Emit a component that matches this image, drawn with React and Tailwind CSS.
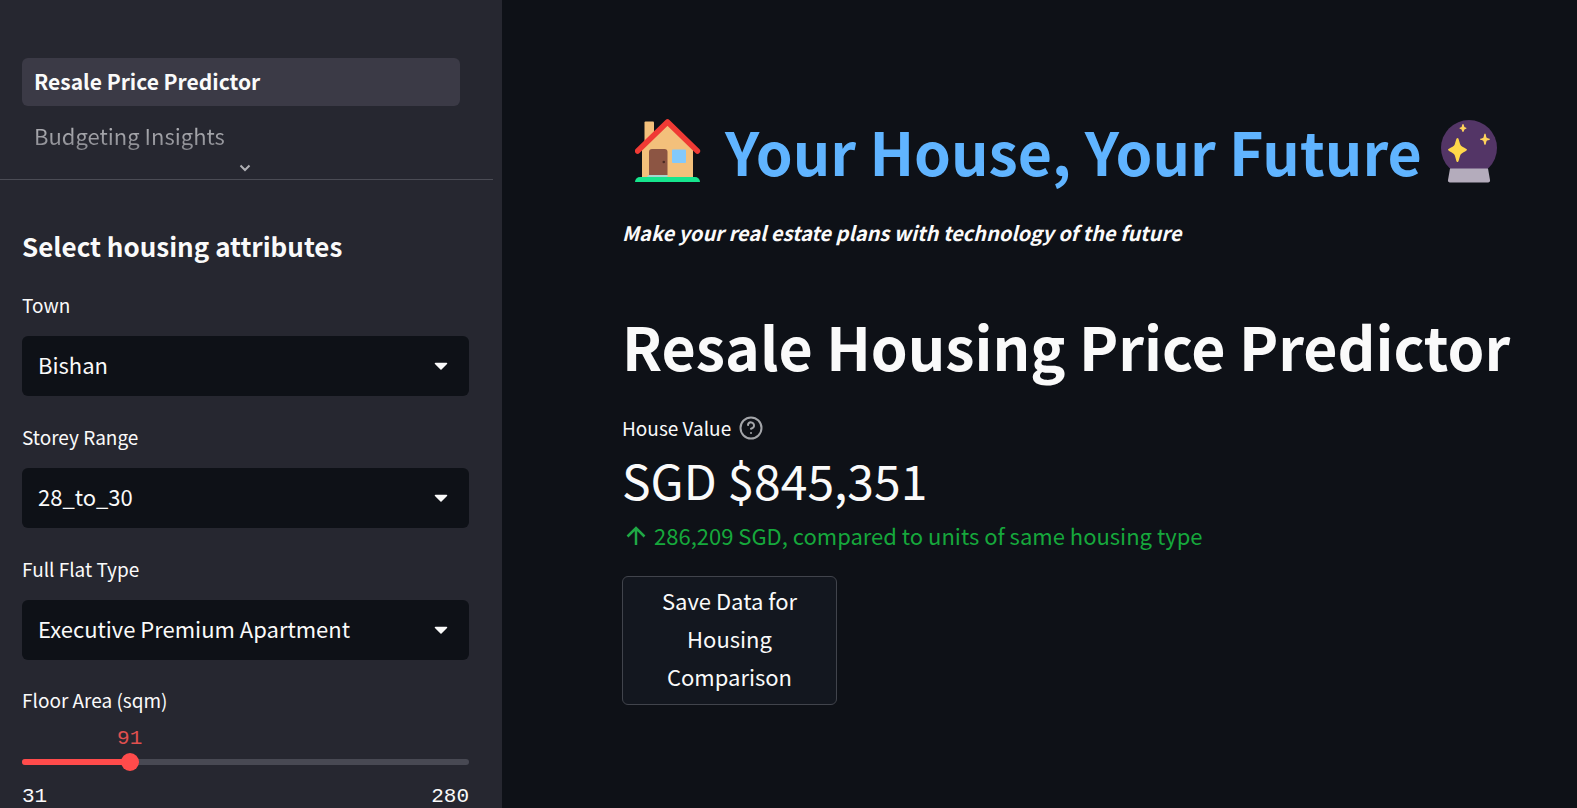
import { useState } from 'react';

const selects = [
  { id: 'town', label: 'Town', options: ['Bishan', 'Ang Mo Kio', 'Bedok', 'Clementi'] },
  { id: 'storey', label: 'Storey Range', options: ['28_to_30', '01_to_03', '04_to_06', '07_to_09'] },
  { id: 'flat', label: 'Full Flat Type', options: ['Executive Premium Apartment', '4 Room Model A', '5 Room Improved'] },
];

function HouseIcon() {
  return (
    <svg className="h-[66px] w-[66px] shrink-0" viewBox="0 0 66 66" aria-hidden="true">
      <rect x="9.5" y="3.5" width="9.5" height="24" rx="1" fill="#f3c07b" />
      <path d="M7 28 32.500 5 58 28V60H7Z" fill="#f3c07b" />
      <path d="M2.600 33 32.500 4 62.400 33" fill="none" stroke="#f03a34" strokeWidth="5.500" strokeLinecap="round" strokeLinejoin="round" />
      <path d="M14 57V34a3 3 0 0 1 3-3H29.500a3 3 0 0 1 3 3V57Z" fill="#8c5543" />
      <circle cx="28.800" cy="44" r="1.300" fill="#4a2a24" />
      <rect x="37" y="31.500" width="14" height="13.500" rx="1" fill="#83c9fb" />
      <path d="M12 59a2.500 2.500 0 0 1 2-2H32.500V60H12Z" fill="#a9d6cd" />
      <path d="M0 64a5 5 0 0 1 5-5H60a5 5 0 0 1 5 5H0Z" fill="#16e58d" />
    </svg>
  );
}

function CrystalBallIcon() {
  return (
    <svg className="h-[70px] w-[56px] shrink-0" viewBox="0 -4 56 70" aria-hidden="true">
      <circle cx="28" cy="28" r="28" fill="#533566" />
      <path d="M9 48.500H47L49 60a2 2 0 0 1-2 2.500H9a2 2 0 0 1-2-2.500Z" fill="#b4acbc" />
      <path d="M16.500 18c1.400 0 1.500 3 2.800 6.500 1 2.600 6.700 3.800 6.700 5.300s-5.700 2.700-6.700 5.400C18 38.500 17.900 42 16.500 42s-1.500-3.500-2.800-6.800C12.700 32.500 7 31.300 7 29.800s5.700-2.700 6.700-5.300C15 21 15.100 18 16.500 18Z" fill="#ffd84a" />
      <path d="M44 13.500c1 0 1 3 1.500 4s3.500.8 3.500 1.800-3 .9-3.500 1.900-.5 3.800-1.500 3.800-1-2.800-1.500-3.800-3.500-.9-3.500-1.900 3-.8 3.500-1.800.5-4 1.500-4Z" fill="#ffd35b" />
      <path d="M22 4c.8 0 .9 2 1.300 2.800s2.200.6 2.200 1.400-1.800.8-2.200 1.600S22.800 12 22 12s-.9-1.400-1.300-2.200-2.200-.8-2.200-1.600 1.800-.6 2.200-1.400S21.200 4 22 4Z" fill="#ffd35b" />
    </svg>
  );
}

function SelectField({ id, label, options }) {
  return (
    <div className="flex flex-col">
      <label htmlFor={id} className="mb-[19px] text-[19px] leading-6">{label}</label>
      <div className="relative">
        <select id={id} className="h-[60px] w-full appearance-none rounded-md bg-[#0e1117] px-4 pb-[3px] text-[22px] outline-none">
          {options.map((option) => (
            <option key={option}>{option}</option>
          ))}
        </select>
        <svg className="pointer-events-none absolute right-5 top-[26px] h-2 w-4" viewBox="0 0 16 8" aria-hidden="true">
          <path d="M2.500 1.500H13.500L8 7Z" fill="#fafafa" stroke="#fafafa" strokeWidth="1.500" strokeLinejoin="round" />
        </svg>
      </div>
    </div>
  );
}

function AreaSlider() {
  const min = 31;
  const max = 280;
  const [value, setValue] = useState(91);
  const percent = `${((value - min) / (max - min)) * 100}%`;
  return (
    <div>
      <label htmlFor="area" className="block text-[19px] leading-6">Floor Area (sqm)</label>
      <div className="relative mt-[15px] h-6 font-[Liberation_Mono,monospace] text-[21px] leading-6 text-[#e0504f]">
        <output htmlFor="area" className="absolute -translate-x-1/2" style={{ left: percent }}>{value}</output>
      </div>
      <div className="relative mt-2 h-[6px] rounded-full bg-[#484953]">
        <div className="h-full rounded-full bg-[#ff4b4b]" style={{ width: percent }} />
        <input
          id="area"
          type="range"
          min={min}
          max={max}
          value={value}
          onChange={(e) => setValue(Number(e.target.value))}
          className="absolute -inset-x-[9px] -top-[6px] h-[18px] appearance-none bg-transparent outline-none [&::-webkit-slider-thumb]:size-[18px] [&::-webkit-slider-thumb]:appearance-none [&::-webkit-slider-thumb]:rounded-full [&::-webkit-slider-thumb]:bg-[#ff4b4b]"
        />
      </div>
      <div className="mt-5 flex justify-between font-[Liberation_Mono,monospace] text-[21px] leading-6">
        <span>{min}</span>
        <span>{max}</span>
      </div>
    </div>
  );
}

export default function App() {
  return (
    <div className="flex min-h-screen bg-[#0e1117] font-[Noto_Sans_CJK_SC,Noto_Sans,sans-serif] text-[#fafafa]">
      <aside className="w-[502px] shrink-0 bg-[#262730]">
        <nav className="mr-[9px] border-b border-[#4b4c55] pt-[58px]">
          <ul className="ml-[22px] mr-[33px] flex flex-col gap-[6px]">
            <li>
              <a href="#predictor" className="block h-12 rounded-md bg-[#3b3a46] px-3 text-[21px] font-bold leading-[46px]">Resale Price Predictor</a>
            </li>
            <li>
              <a href="#budgeting" className="block h-12 bg-linear-to-b from-[#c8c8cc] to-[#787980] bg-clip-text px-3 text-[22px] leading-[46px] text-transparent">Budgeting Insights</a>
            </li>
          </ul>
          <button type="button" aria-label="Show more pages" className="flex h-[19px] w-full items-center justify-center pb-1 pr-[3px]">
            <svg className="h-2 w-3" viewBox="0 0 12 8" fill="none" stroke="#b0b0b5" strokeWidth="2" aria-hidden="true">
              <path d="M1.500 1.500 6 6 10.500 1.500" />
            </svg>
          </button>
        </nav>
        <div className="pl-[22px] pr-[33px] pt-[46px]">
          <h2 className="text-[26px] font-bold leading-10">Select housing attributes</h2>
          <div className="mt-[27px] flex flex-col gap-[29px]">
            {selects.map((field) => (
              <SelectField key={field.id} {...field} />
            ))}
          </div>
          <div className="mt-7">
            <AreaSlider />
          </div>
        </div>
      </aside>
      <main className="min-w-0 flex-1 pl-[120px] pt-[107px]">
        <h1 className="flex items-center pl-[13px] text-[59px] font-bold leading-[88px] text-[#60b4ff]">
          <HouseIcon />
          <span className="ml-6 whitespace-nowrap">Your House, Your Future</span>
          <span className="ml-[19px]"><CrystalBallIcon /></span>
        </h1>
        <p className="mt-5 text-[20px] font-bold italic leading-9">Make your real estate plans with technology of the future</p>
        <h1 className="mt-[51px] whitespace-nowrap text-[59px] font-bold leading-[88px]">Resale Housing Price Predictor</h1>
        <div className="mt-[22px] flex items-center gap-2">
          <span className="text-[19px] leading-8">House Value</span>
          <button type="button" aria-label="Help">
            <svg className="size-6" viewBox="0 0 24 24" fill="none" stroke="#a3a5a9" strokeWidth="2" strokeLinecap="round" strokeLinejoin="round" aria-hidden="true">
              <circle cx="12" cy="12" r="10.500" />
              <path d="M9 9a3 3 0 0 1 6 .8c0 2-3 3-3 3M12 17h.010" />
            </svg>
          </button>
        </div>
        <div className="text-[48px] leading-[70px]">SGD $845,351</div>
        <div className="mt-[3px] flex items-center text-[22px] leading-9 text-[#16a83c]">
          <svg className="ml-1 mr-2 size-5" viewBox="0 0 20 20" fill="none" stroke="#1fa845" strokeWidth="2.500" aria-hidden="true">
            <path d="M10 20V3M1.500 11.500 10 3l8.500 8.500" />
          </svg>
          286,209 SGD, compared to units of same housing type
        </div>
        <button type="button" className="mt-[23px] w-[215px] rounded-md border border-[#41444c] bg-[#13171f] px-6 pb-[9px] pt-[4px] text-[22px] leading-[38px]">
          Save Data for Housing Comparison
        </button>
      </main>
    </div>
  );
}
